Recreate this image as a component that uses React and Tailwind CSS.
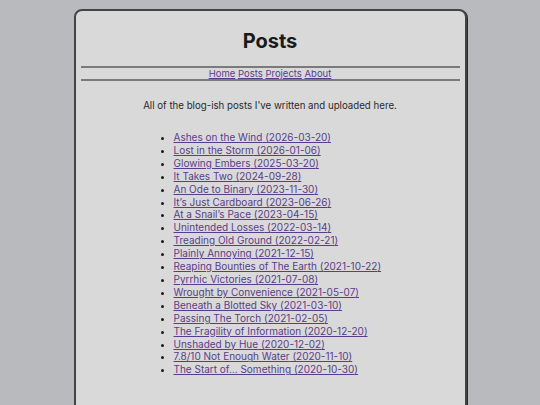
import React from 'react';

const posts = [
  ['Ashes on the Wind', '2026-03-20'],
  ['Lost in the Storm', '2026-01-06'],
  ['Glowing Embers', '2025-03-20'],
  ['It Takes Two', '2024-09-28'],
  ['An Ode to Binary', '2023-11-30'],
  ['It\u2019s Just Cardboard', '2023-06-26'],
  ['At a Snail\u2019s Pace', '2023-04-15'],
  ['Unintended Losses', '2022-03-14'],
  ['Treading Old Ground', '2022-02-21'],
  ['Plainly Annoying', '2021-12-15'],
  ['Reaping Bounties of The Earth', '2021-10-22'],
  ['Pyrrhic Victories', '2021-07-08'],
  ['Wrought by Convenience', '2021-05-07'],
  ['Beneath a Blotted Sky', '2021-03-10'],
  ['Passing The Torch', '2021-02-05'],
  ['The Fragility of Information', '2020-12-20'],
  ['Unshaded by Hue', '2020-12-02'],
  ['7.8/10 Not Enough Water', '2020-11-10'],
  ['The Start of\u2026 Something', '2020-10-30'],
];

const navItems = ['Home', 'Posts', 'Projects', 'About'];

export default function App() {
  return (
    <div className="min-h-screen bg-[#b9babd] pt-[9px] font-['Inter',sans-serif] overflow-hidden h-[405px]">
      <div className="mx-auto w-[393px] h-[420px] bg-[#d9d9d9] border-2 border-[#444447] rounded-[8px] shadow-[1px_1px_0_#2a2a2c] px-[5px]">
        <h1 className="text-center text-[20px] font-bold text-[#1a1a1a] pt-[18px] leading-[24px]">Posts</h1>
        <div className="mt-[13px] border-t-2 border-b-2 border-[#7a7a7a] text-center text-[9.5px] leading-[11px]">
          {navItems.map((n, i) => (
            <React.Fragment key={n}>
              <a href="#" className="text-[#5a3d8a] underline underline-offset-1">{n}</a>
              {i < navItems.length - 1 ? ' ' : ''}
            </React.Fragment>
          ))}
        </div>
        <p className="text-center text-[9.7px] text-[#2a2a2a] mt-[18px] leading-[13px]">
          All of the blog-ish posts I've written and uploaded here.
        </p>
        <ul className="list-disc mt-[19px] pl-[93px] text-[10px] leading-[12.9px] text-[#1a1a1a]">
          {posts.map(([t, d]) => (
            <li key={t}>
              <a href="#" className="text-[#5a3d8a] underline underline-offset-1">{t} ({d})</a>
            </li>
          ))}
        </ul>
      </div>
    </div>
  );
}
